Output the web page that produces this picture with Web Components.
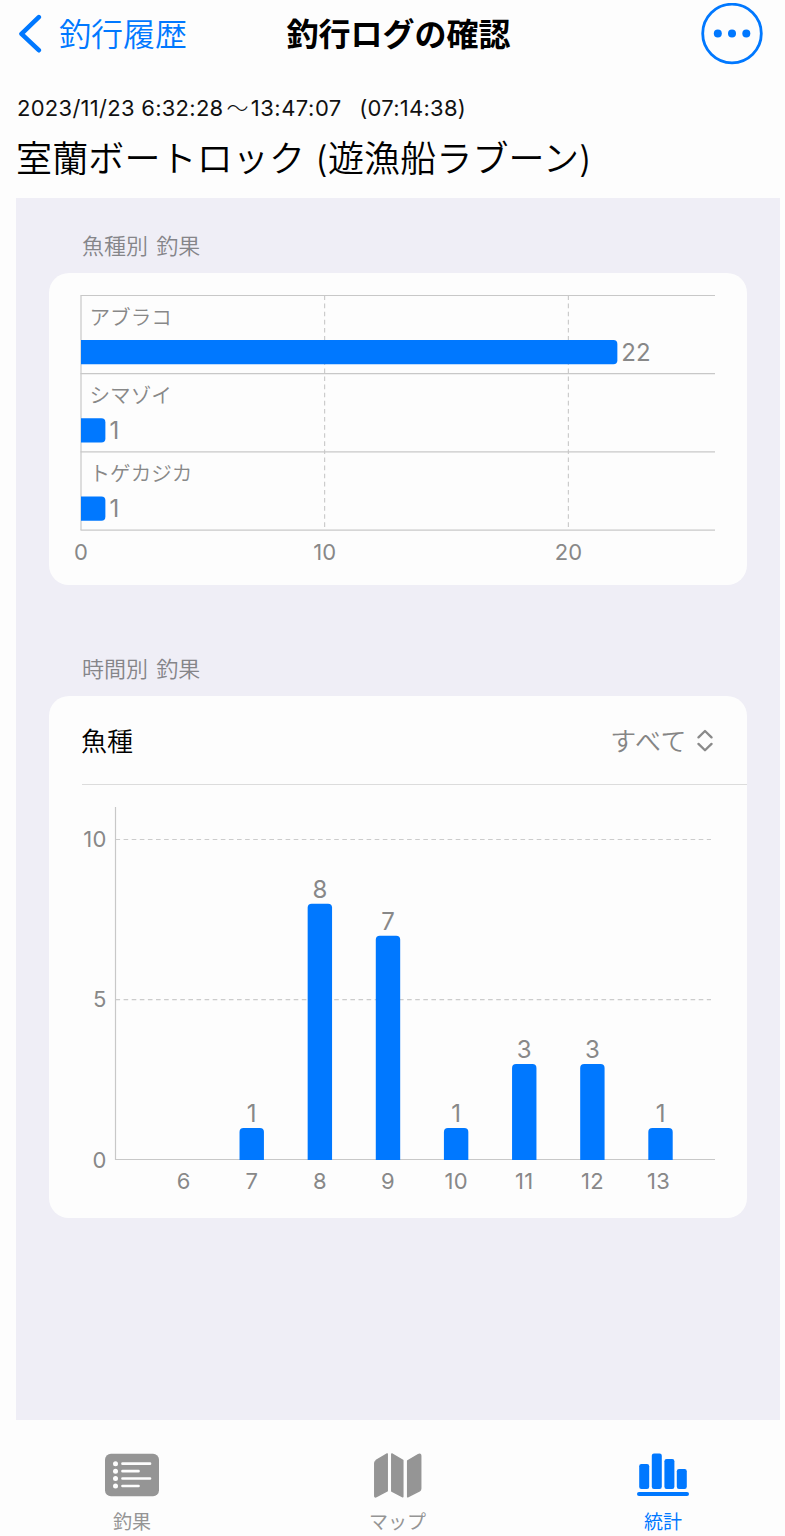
<!DOCTYPE html>
<html lang="ja">
<head>
<meta charset="utf-8">
<title>釣行ログの確認</title>
<style>
body { margin: 0; background: #fdfdfd; color: #000; font-family: Inter, "Noto Sans CJK JP", sans-serif; }
</style>
</head>
<body>
<log-screen></log-screen>
<script>
const define = (name, html, render) => {
  const template = document.createElement('template');
  template.innerHTML = html;
  customElements.define(name, class extends HTMLElement {
    constructor() {
      super();
      this.attachShadow({ mode: 'open' }).append(template.content.cloneNode(true));
    }
    connectedCallback() { if (render) render(this.shadowRoot, this); }
  });
};

define('nav-header', `
<style>
:host { display: grid; grid-template-columns: 1fr auto 1fr; align-items: center; height: 68px; padding: 0 22px 0 34px; box-sizing: border-box; font-size: 32px; line-height: 69px; white-space: nowrap; }
.back { display: flex; align-items: center; gap: 17px; margin-left: -16px; color: #0078ff; font-weight: 350; }
.title { font-weight: 700; }
.more { justify-self: end; }
svg { display: block; margin-top: -2px; }
</style>
<div class="back">
  <svg width="24" height="40" viewBox="0 0 24 40" fill="none" stroke="#0078ff" stroke-width="4.6" stroke-linecap="round" stroke-linejoin="round"><path d="M20.8 3.2 3.5 19.8 20.8 36.2"/></svg>
  <span><slot name="back"></slot></span>
</div>
<div class="title"><slot></slot></div>
<svg class="more" width="62" height="62" viewBox="0 0 62 62"><circle cx="31" cy="30.5" r="29.3" fill="none" stroke="#0078ff" stroke-width="2.8"/><g fill="#0078ff"><circle cx="16.8" cy="30.5" r="4"/><circle cx="31" cy="30.5" r="4"/><circle cx="45.3" cy="30.5" r="4"/></g></svg>`);

define('log-summary', `
<style>
:host { display: block; height: 130px; padding-left: 17px; box-sizing: border-box; white-space: nowrap; }
.time { height: 34px; line-height: 34px; padding-top: 23px; font-size: 22px; color: #111; white-space: pre; letter-spacing: .27px; }
.name { height: 60px; line-height: 60px; margin: 4px 0 0 -1px; font-size: 36px; font-weight: 350; letter-spacing: .13px; }
</style>
<div class="time"><slot name="time"></slot></div>
<div class="name"><slot></slot></div>`);

define('stat-section', `
<style>
:host { display: block; }
.label { height: 42px; line-height: 43px; padding: 0 0 6px 33px; font-size: 22px; font-weight: 350; color: #858589; word-spacing: 2px; }
.card { width: 698px; border-radius: 20px; background: #fdfdfd; overflow: hidden; }
</style>
<div class="label"><slot name="label"></slot></div>
<div class="card"><slot></slot></div>`);

const chartStyle = `<style>
:host { display: block; }
svg { display: block; }
text { fill: #888; }
.cat { font-size: 20.6px; font-weight: 350; }
.tick { font-size: 22px; letter-spacing: .2px; }
.value { font-size: 24px; }
.mid { text-anchor: middle; }
.end { text-anchor: end; }
.rule { stroke: #c8c8c8; stroke-width: 1.2; fill: none; }
.dash { stroke: #cccccc; stroke-width: 1.2; stroke-dasharray: 4.6 3.5; fill: none; }
.bar { fill: #0078ff; }
</style>`;

define('species-chart', chartStyle + '<svg width="698" height="312" viewBox="49 273 698 312"></svg>', (root) => {
  const data = [['アブラコ', 22], ['シマゾイ', 1], ['トゲカジカ', 1]];
  const x0 = 81, unit = 24.38, y0 = 295.5, row = 78.2;
  let out = '';
  for (const t of [10, 20]) out += `<path class="dash" d="M${x0 + t * unit - .2} ${y0}V530"/>`;
  for (let i = 0; i < 4; i++) out += `<path class="rule" d="M80.5 ${y0 + i * row}H715"/>`;
  out += `<path class="rule" d="M81 ${y0}V530"/>`;
  data.forEach(([name, n], i) => {
    const top = y0 + i * row + 44.5, w = n * unit;
    out += `<path class="bar" d="M${x0} ${top}h${w - 4}a4 4 0 0 1 4 4v16.3a4 4 0 0 1 -4 4H${x0}z"/>`;
    out += `<text class="cat" x="89.5" y="${top - 15.5}">${name}</text>`;
    out += `<text class="value" x="${x0 + w + 4}" y="${top + 21}">${n}</text>`;
  });
  for (const t of [0, 10, 20]) out += `<text class="tick mid" x="${x0 + t * unit}" y="559.5">${t}</text>`;
  root.querySelector('svg').innerHTML = out;
});

define('hourly-chart', chartStyle + '<svg width="698" height="433" viewBox="49 785 698 433"></svg>', (root) => {
  const data = [[6, 0], [7, 1], [8, 8], [9, 7], [10, 1], [11, 3], [12, 3], [13, 1]];
  const base = 1160, unit = 32.02, first = 183.6, step = 68.13;
  let out = '';
  for (const t of [5, 10]) out += `<path class="dash" d="M115.5 ${base - .3 - t * unit}H711"/>`;
  out += `<path class="rule" d="M115.5 807V1159.5H715"/>`;
  for (const t of [0, 5, 10]) out += `<text class="tick end" x="106.5" y="${base + 7.5 - t * unit}">${t}</text>`;
  data.forEach(([hour, n], i) => {
    const x = first + i * step, h = n * unit;
    if (n) {
      out += `<path class="bar" d="M${x - 12.2} ${base}V${base - h + 4}a4 4 0 0 1 4 -4h16.4a4 4 0 0 1 4 4V${base}z"/>`;
      out += `<text class="value mid" x="${x}" y="${base - h - 6}">${n}</text>`;
    }
    out += `<text class="tick mid" x="${hour === 13 ? x - 2 : x}" y="1189">${hour}</text>`;
  });
  root.querySelector('svg').innerHTML = out;
});

define('picker-row', `
<style>
:host { display: flex; align-items: center; height: 88px; margin-left: 33px; padding-right: 34px; border-bottom: 1px solid #dcdcdc; font-size: 26px; font-weight: 350; line-height: 38px; }
.name { margin: 4px 0 0 -1px; }
.value { margin: 3px 10px 0 auto; color: #858585; letter-spacing: .5px; }
</style>
<span class="name"><slot></slot></span><span class="value"><slot name="value"></slot></span>
<svg width="16" height="24" viewBox="0 0 16 24" fill="none" stroke="#8a8a8a" stroke-width="2.3" stroke-linecap="round" stroke-linejoin="round"><path d="M1.5 9.4 8 3l6.500 6.400M1.500 15.900 8 22.300l6.500-6.400"/></svg>`);

define('tab-item', `
<style>
:host { display: flex; flex-direction: column; align-items: center; width: 120px; color: #959595; font-size: 19px; line-height: 28px; }
:host([active]) { color: #0078ff; }
.icon { height: 44px; margin-bottom: 12px; }
::slotted(svg) { display: block; }
</style>
<div class="icon"><slot name="icon"></slot></div><span><slot></slot></span>`);

define('tab-bar', `
<style>
:host { display: flex; justify-content: space-between; height: 116px; box-sizing: border-box; padding: 33px 62px 0 72px; }
</style>
<tab-item>
  <svg slot="icon" width="54" height="44" viewBox="0 0 54 44"><rect y=".7" width="54" height="42.600" rx="6" fill="currentColor"/><g fill="#fdfdfd"><circle cx="10.500" cy="10.700" r="2.500"/><circle cx="10.500" cy="18.200" r="2.500"/><circle cx="10.500" cy="25.500" r="2.500"/><circle cx="10.500" cy="33" r="2.500"/></g><path d="M17.500 10.700H45M17.500 18.200H33.500M17.500 25.500H45M17.500 33H33.500" stroke="#fdfdfd" stroke-width="2.700" stroke-linecap="round"/></svg>
  釣果
</tab-item>
<tab-item>
  <svg slot="icon" width="48" height="46" viewBox="0 0 48 46"><g fill="currentColor" stroke="currentColor" stroke-width="1.500" stroke-linejoin="round"><path d="M.8 10Q.8 8.500 2.200 7.500L13.200 1V37.800L2.300 43.600Q.8 44.400.8 43Z"/><path d="M17.800 1 28.800 7.500V43.800L17.800 38Z"/><path d="M33.700 7.800 44.300 1.600Q46.700.5 46.700 2.800V35.500Q46.700 37 45.500 37.800L33.700 43.800Z"/></g></svg>
  マップ
</tab-item>
<tab-item active>
  <svg slot="icon" width="52" height="44" viewBox="0 0 52 44" fill="currentColor"><rect x="2.200" y="11" width="10" height="25" rx="2.200"/><rect x="14.800" y=".500" width="10" height="35.500" rx="2.200"/><rect x="27.400" y="6" width="10" height="30" rx="2.200"/><rect x="39.800" y="16" width="10" height="20" rx="2.200"/><rect y="39" width="52" height="4" rx="2"/></svg>
  統計
</tab-item>`);

define('log-screen', `
<style>
:host { display: flex; flex-direction: column; width: 785px; height: 1536px; overflow: hidden; }
main { display: flex; flex-direction: column; gap: 63px; flex: 0 0 1222px; margin: 0 5px 0 16px; padding: 27px 33px 0; box-sizing: border-box; background: #efeef6; }
.tilde { margin: 0 2px 0 3px; font-weight: 300; }
.end { letter-spacing: .5px; margin-right: -2px; }
</style>
<nav-header><span slot="back">釣行履歴</span>釣行ログの確認</nav-header>
<log-summary><span slot="time">2023/11/23 6:32:28<span class="tilde">～</span><span class="end">13:47:07</span>&nbsp;&nbsp; (07:14:38)</span>室蘭ボートロック (遊漁船ラブーン)</log-summary>
<main>
  <stat-section><span slot="label">魚種別 釣果</span><species-chart></species-chart></stat-section>
  <stat-section><span slot="label">時間別 釣果</span><picker-row>魚種<span slot="value">すべて</span></picker-row><hourly-chart></hourly-chart></stat-section>
</main>
<tab-bar></tab-bar>`);
</script>
</body>
</html>
